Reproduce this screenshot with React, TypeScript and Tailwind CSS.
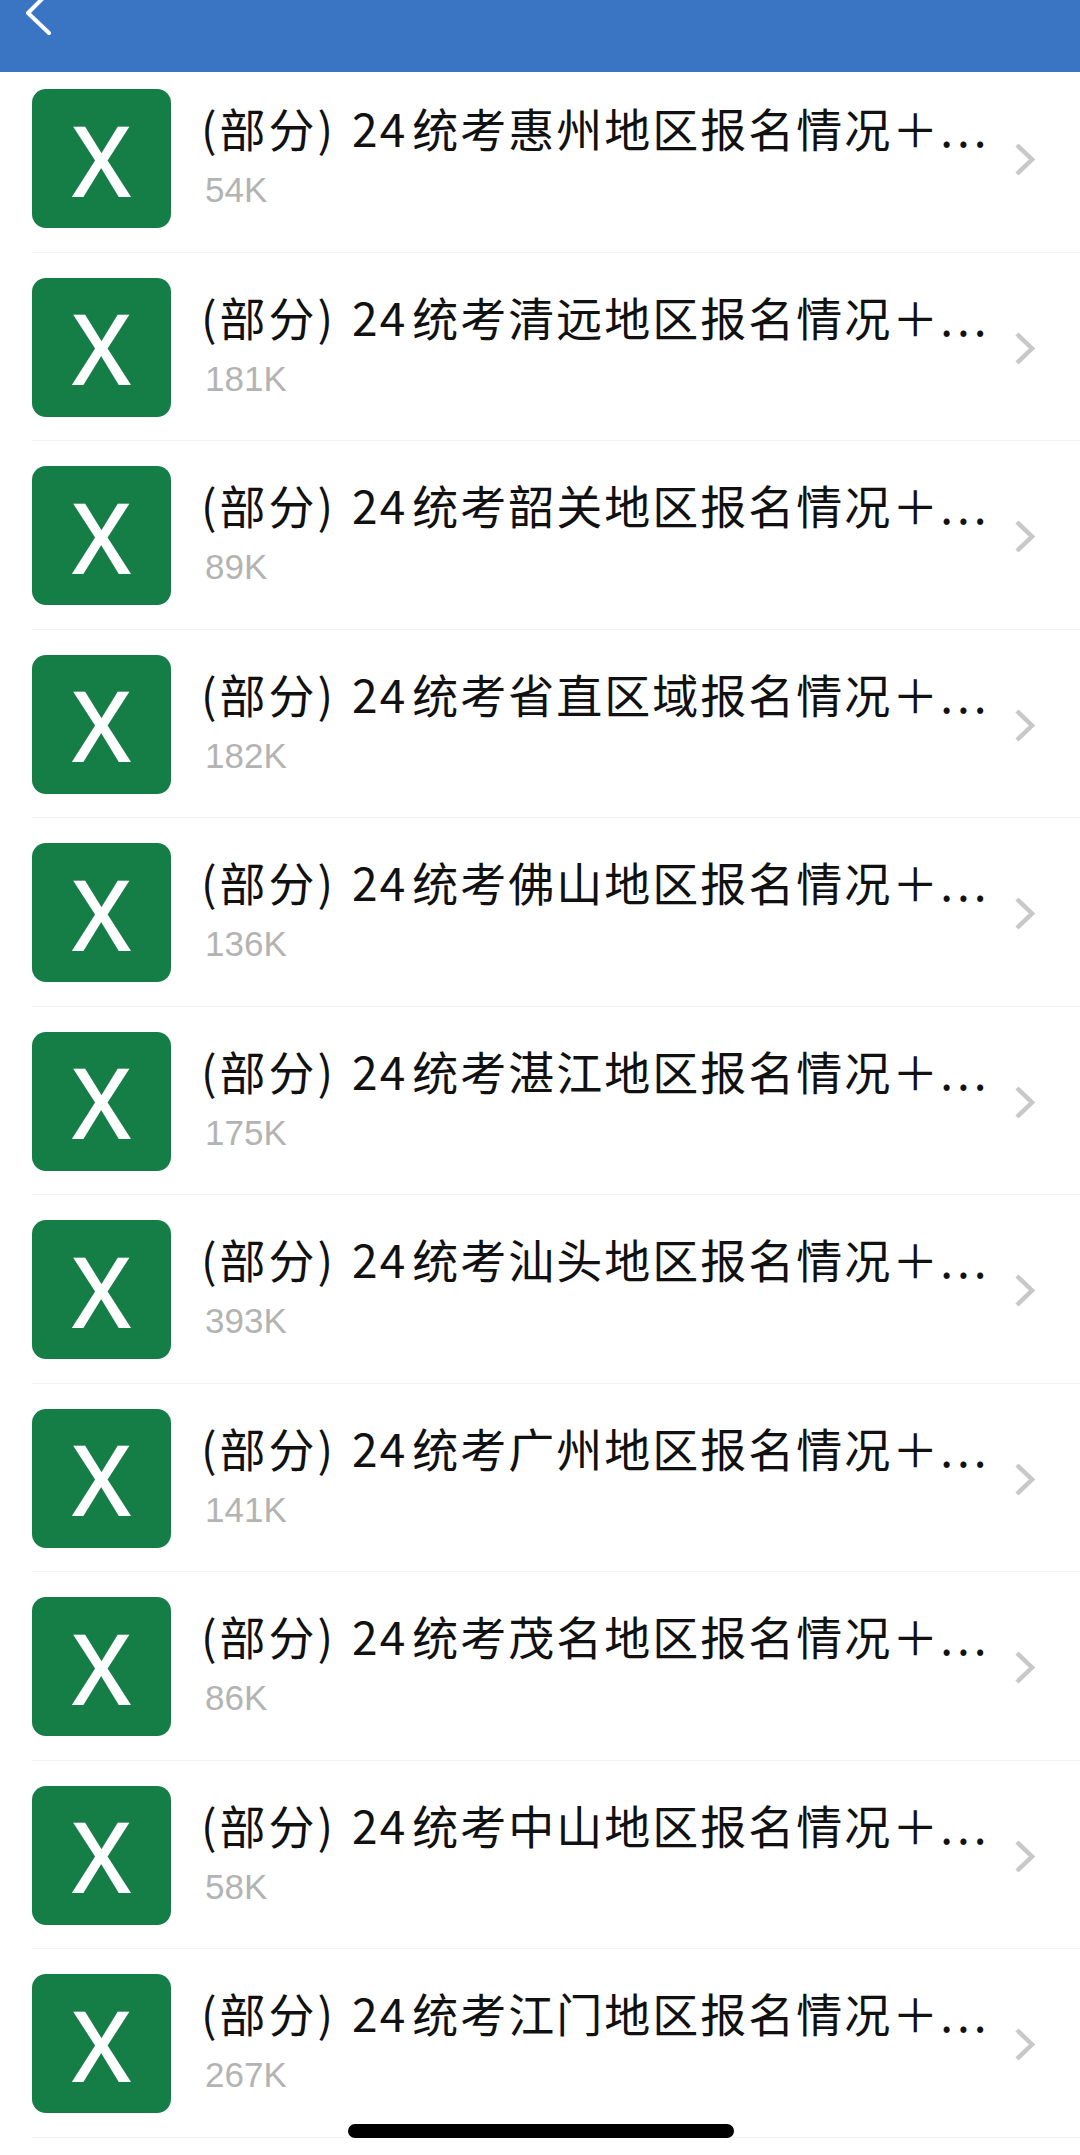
const files = [
  { area: "惠州地区", size: "54K" },
  { area: "清远地区", size: "181K" },
  { area: "韶关地区", size: "89K" },
  { area: "省直区域", size: "182K" },
  { area: "佛山地区", size: "136K" },
  { area: "湛江地区", size: "175K" },
  { area: "汕头地区", size: "393K" },
  { area: "广州地区", size: "141K" },
  { area: "茂名地区", size: "86K" },
  { area: "中山地区", size: "58K" },
  { area: "江门地区", size: "267K" },
];

function FileRow({ area, size }: { area: string; size: string }) {
  return (
    <div className="ml-[32px] flex h-[188.5px] items-start border-b border-[#f2f2f2] pt-[25px]">
      <div className="flex h-[139px] w-[139px] shrink-0 items-center justify-center rounded-[14px] bg-[#157d46] font-['Noto_Sans',sans-serif] text-[98px] leading-none font-medium text-white">
        X
      </div>
      <div className="ml-[30px] min-w-0 flex-1 pt-[12px]">
        <p className="flex text-[46px] leading-[52px] tracking-[2px] whitespace-nowrap text-[#111]">
          <span className="tracking-[3px]">(部分)</span>
          <span className="ml-[16px]">24</span>
          <span className="ml-[5px]">统考{area}报名情况＋</span>
          <span className="tracking-[4px]">...</span>
        </p>
        <p className="mt-[17px] ml-[4px] font-['Liberation_Sans',sans-serif] text-[35px] leading-[40px] text-[#b3b3b3]">{size}</p>
      </div>
      <svg width="20" height="33" viewBox="0 0 20 33" className="mt-[54px] mr-[45px] shrink-0" fill="none">
        <path d="M2 2 L17 16.5 L2 31" stroke="#c8c8c8" strokeWidth="4.5" />
      </svg>
    </div>
  );
}

export default function App() {
  return (
    <div className="relative h-[2155px] w-[1080px] overflow-hidden bg-white font-['Noto_Sans_CJK_SC','Noto_Sans',sans-serif]">
      <header className="h-[72px] bg-[#3a75c4]">
        <svg width="40" height="50" viewBox="0 0 40 50" className="absolute top-[-10px] left-[21px]" fill="none">
          <path d="M27 3 L7 23 L28 43" stroke="#fff" strokeWidth="4" strokeLinecap="round" strokeLinejoin="round" />
        </svg>
      </header>
      <div className="mt-[-8px]">
        {files.map((f) => (
          <FileRow key={f.area} area={f.area} size={f.size} />
        ))}
      </div>
      <div className="absolute top-[2124px] left-[348px] h-[14px] w-[386px] rounded-full bg-black" />
    </div>
  );
}
